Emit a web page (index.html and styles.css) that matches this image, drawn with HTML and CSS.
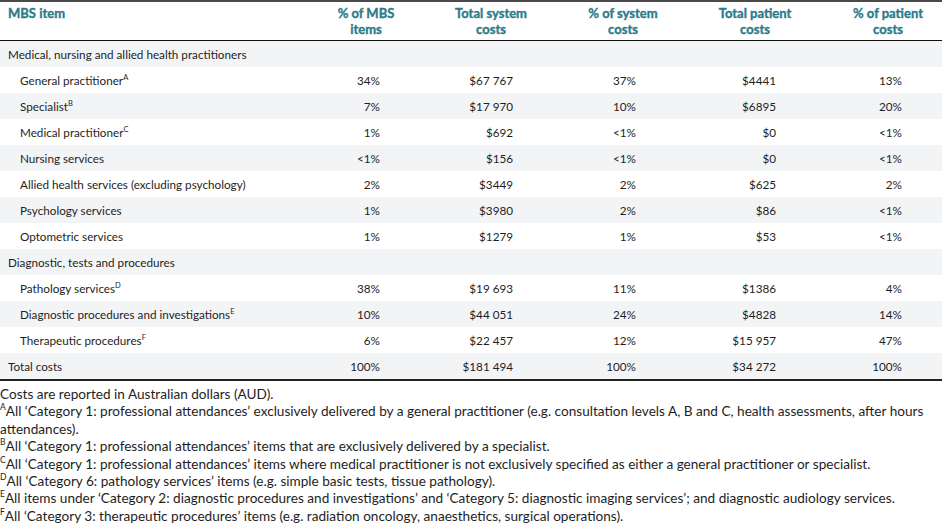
FILE: index.html
```html
<!DOCTYPE html>
<html>
<head>
<meta charset="utf-8">
<link rel="stylesheet" href="styles.css">
</head>
<body>
<table class="mbs">
  <colgroup>
    <col class="c1"><col class="c2"><col class="c3"><col class="c4"><col class="c5"><col class="c6">
  </colgroup>
  <thead>
    <tr>
      <th class="left">MBS item</th>
      <th>% of MBS<br>items</th>
      <th>Total system<br>costs</th>
      <th>% of system<br>costs</th>
      <th>Total patient<br>costs</th>
      <th>% of patient<br>costs</th>
    </tr>
  </thead>
  <tbody>
    <tr class="grey"><td class="sec">Medical, nursing and allied health practitioners</td><td></td><td></td><td></td><td></td><td></td></tr>
    <tr><td class="sub">General practitioner<sup>A</sup></td><td class="n2">34%</td><td class="n3">$67 767</td><td class="n4">37%</td><td class="n5">$4441</td><td class="n6">13%</td></tr>
    <tr class="grey"><td class="sub">Specialist<sup>B</sup></td><td class="n2">7%</td><td class="n3">$17 970</td><td class="n4">10%</td><td class="n5">$6895</td><td class="n6">20%</td></tr>
    <tr><td class="sub">Medical practitioner<sup>C</sup></td><td class="n2">1%</td><td class="n3">$692</td><td class="n4">&lt;1%</td><td class="n5">$0</td><td class="n6">&lt;1%</td></tr>
    <tr class="grey"><td class="sub">Nursing services</td><td class="n2">&lt;1%</td><td class="n3">$156</td><td class="n4">&lt;1%</td><td class="n5">$0</td><td class="n6">&lt;1%</td></tr>
    <tr><td class="sub">Allied health services (excluding psychology)</td><td class="n2">2%</td><td class="n3">$3449</td><td class="n4">2%</td><td class="n5">$625</td><td class="n6">2%</td></tr>
    <tr class="grey"><td class="sub">Psychology services</td><td class="n2">1%</td><td class="n3">$3980</td><td class="n4">2%</td><td class="n5">$86</td><td class="n6">&lt;1%</td></tr>
    <tr><td class="sub">Optometric services</td><td class="n2">1%</td><td class="n3">$1279</td><td class="n4">1%</td><td class="n5">$53</td><td class="n6">&lt;1%</td></tr>
    <tr class="grey"><td class="sec">Diagnostic, tests and procedures</td><td></td><td></td><td></td><td></td><td></td></tr>
    <tr><td class="sub">Pathology services<sup>D</sup></td><td class="n2">38%</td><td class="n3">$19 693</td><td class="n4">11%</td><td class="n5">$1386</td><td class="n6">4%</td></tr>
    <tr class="grey"><td class="sub">Diagnostic procedures and investigations<sup>E</sup></td><td class="n2">10%</td><td class="n3">$44 051</td><td class="n4">24%</td><td class="n5">$4828</td><td class="n6">14%</td></tr>
    <tr><td class="sub">Therapeutic procedures<sup>F</sup></td><td class="n2">6%</td><td class="n3">$22 457</td><td class="n4">12%</td><td class="n5">$15 957</td><td class="n6">47%</td></tr>
    <tr class="grey"><td class="sec">Total costs</td><td class="n2">100%</td><td class="n3">$181 494</td><td class="n4">100%</td><td class="n5">$34 272</td><td class="n6">100%</td></tr>
  </tbody>
</table>
<div class="notes">
  <p>Costs are reported in Australian dollars (AUD).</p>
  <p><sup>A</sup>All ‘Category 1: professional attendances’ exclusively delivered by a general practitioner (e.g. consultation levels A, B and C, health assessments, after hours attendances).</p>
  <p><sup>B</sup>All ‘Category 1: professional attendances’ items that are exclusively delivered by a specialist.</p>
  <p><sup>C</sup>All ‘Category 1: professional attendances’ items where medical practitioner is not exclusively specified as either a general practitioner or specialist.</p>
  <p><sup>D</sup>All ‘Category 6: pathology services’ items (e.g. simple basic tests, tissue pathology).</p>
  <p><sup>E</sup>All items under ‘Category 2: diagnostic procedures and investigations’ and ‘Category 5: diagnostic imaging services’; and diagnostic audiology services.</p>
  <p><sup>F</sup>All ‘Category 3: therapeutic procedures’ items (e.g. radiation oncology, anaesthetics, surgical operations).</p>
</div>
</body>
</html>
```

FILE: styles.css
```css
html, body {
  margin: 0;
  padding: 0;
  background: #fff;
}
body {
  font-family: "Lato", "DejaVu Sans", sans-serif;
  color: #1e1e1e;
}
.mbs {
  width: 942px;
  border-collapse: collapse;
  table-layout: fixed;
  font-size: 11.7px;
  border-top: 2px solid #4a4a4a;
  border-bottom: 2px solid #222;
}
.c1 { width: 320px; }
.c2 { width: 92px; }
.c3 { width: 158px; }
.c4 { width: 106px; }
.c5 { width: 158px; }
.c6 { width: 108px; }
.mbs th {
  color: #2c7b8b;
  font-size: 13px;
  font-weight: 700;
  -webkit-text-stroke: 0.35px #2c7b8b;
  text-align: center;
  vertical-align: top;
  line-height: 16px;
  padding: 3px 0 3px;
  border-bottom: 1px solid #111;
}
.mbs th.left {
  text-align: left;
  padding-left: 8px;
}
.mbs td {
  height: 26px;
  padding: 0;
  line-height: 16px;
  vertical-align: middle;
  white-space: nowrap;
}
.mbs tr.grey td {
  background: #f3f4f6;
}
.mbs td.sec { padding-left: 8px; }
.mbs td.sub { padding-left: 20px; }
.mbs sup {
  font-size: 7.5px;
  line-height: 0;
  vertical-align: 5px;
}
.n2, .n3, .n4, .n5, .n6 { text-align: right; }
.mbs td.n2 { padding-right: 32px; }
.mbs td.n3 { padding-right: 57px; }
.mbs td.n4 { padding-right: 40px; }
.mbs td.n5 { padding-right: 58px; }
.mbs td.n6 { padding-right: 40px; }
.notes {
  font-size: 13.6px;
  line-height: 17.4px;
  padding-top: 5px;
}
.notes p {
  margin: 0;
}
.notes sup {
  font-size: 8.5px;
  line-height: 0;
  vertical-align: 6px;
}
```
